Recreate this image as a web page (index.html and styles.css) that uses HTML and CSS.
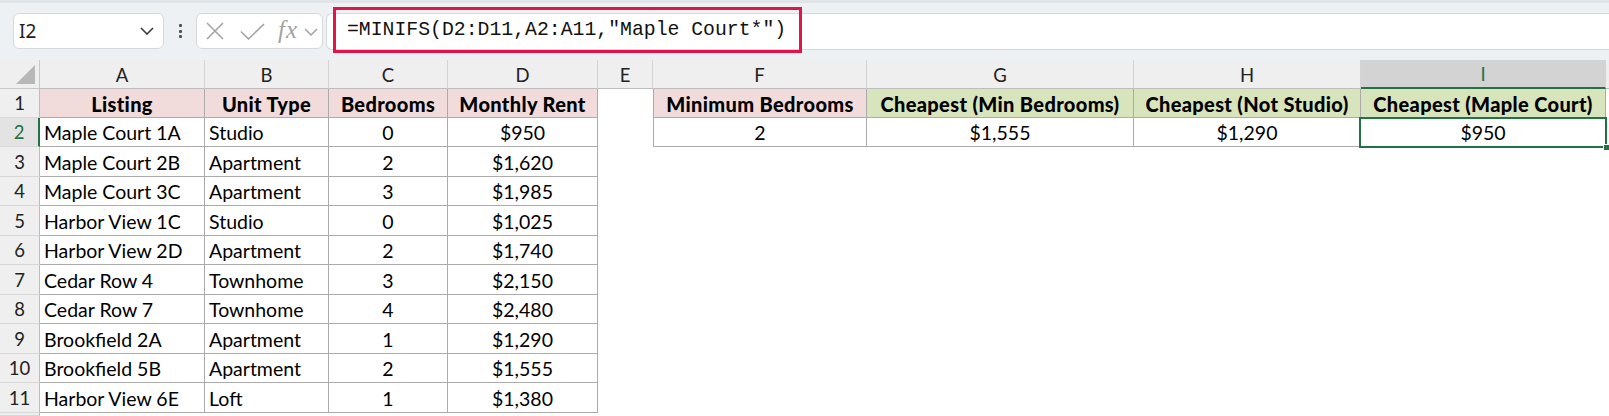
FILE: index.html
```html
<!DOCTYPE html>
<html lang="en">
<head>
<meta charset="utf-8">
<title>MINIFS</title>
<link rel="stylesheet" href="styles.css">
</head>
<body>
<div class="app">
  <div class="toolbar">
    <div class="namebox">
      <span class="nb-text">I2</span>
      <svg class="chev" width="14" height="8" viewBox="0 0 14 8"><path d="M1 1 L7 7 L13 1" fill="none" stroke="#3c3c3c" stroke-width="1.6"/></svg>
    </div>
    <div class="dots"><span></span><span></span><span></span></div>
    <div class="fxbox">
      <svg class="ic-x" width="18" height="18" viewBox="0 0 18 18"><path d="M1 1 L17 17 M17 1 L1 17" fill="none" stroke="#a3a3a3" stroke-width="1.6"/></svg>
      <svg class="ic-check" width="25" height="17" viewBox="0 0 25 17"><path d="M1 8.5 L8.5 16 L24 1" fill="none" stroke="#a3a3a3" stroke-width="1.6"/></svg>
      <span class="fx">fx</span>
      <svg class="chev-s" width="14" height="8" viewBox="0 0 14 8"><path d="M1 1 L7 7 L13 1" fill="none" stroke="#a3a3a3" stroke-width="1.5"/></svg>
    </div>
    <div class="formula">
      <span class="formula-text">=MINIFS(D2:D11,A2:A11,"Maple Court*")</span>
    </div>
  </div>

  <div class="sheet">
    <div class="corner"><span class="tri"></span></div>
    <div class="ch">A</div>
    <div class="ch">B</div>
    <div class="ch">C</div>
    <div class="ch">D</div>
    <div class="ch">E</div>
    <div class="ch">F</div>
    <div class="ch">G</div>
    <div class="ch">H</div>
    <div class="ch ch-sel">I</div>
    <div class="ch ch-last"></div>

    <div class="rh">1</div>
    <div class="c hd pink">Listing</div>
    <div class="c hd pink">Unit Type</div>
    <div class="c hd pink">Bedrooms</div>
    <div class="c hd pink">Monthly Rent</div>
    <div class="e"></div>
    <div class="c hd pink fl">Minimum Bedrooms</div>
    <div class="c hd green">Cheapest (Min Bedrooms)</div>
    <div class="c hd green">Cheapest (Not Studio)</div>
    <div class="c hd green">Cheapest (Maple Court)</div>
    <div class="e"></div>

    <div class="rh rh-sel">2</div>
    <div class="c l">Maple Court 1A</div>
    <div class="c l">Studio</div>
    <div class="c m">0</div>
    <div class="c m">$950</div>
    <div class="e"></div>
    <div class="c m fl">2</div>
    <div class="c m">$1,555</div>
    <div class="c m">$1,290</div>
    <div class="c m sel">$950<span class="handle"></span></div>
    <div class="e"></div>

    <div class="rh">3</div>
    <div class="c l">Maple Court 2B</div>
    <div class="c l">Apartment</div>
    <div class="c m">2</div>
    <div class="c m">$1,620</div>
    <div class="e span6"></div>

    <div class="rh">4</div>
    <div class="c l">Maple Court 3C</div>
    <div class="c l">Apartment</div>
    <div class="c m">3</div>
    <div class="c m">$1,985</div>
    <div class="e span6"></div>

    <div class="rh">5</div>
    <div class="c l">Harbor View 1C</div>
    <div class="c l">Studio</div>
    <div class="c m">0</div>
    <div class="c m">$1,025</div>
    <div class="e span6"></div>

    <div class="rh">6</div>
    <div class="c l">Harbor View 2D</div>
    <div class="c l">Apartment</div>
    <div class="c m">2</div>
    <div class="c m">$1,740</div>
    <div class="e span6"></div>

    <div class="rh">7</div>
    <div class="c l">Cedar Row 4</div>
    <div class="c l">Townhome</div>
    <div class="c m">3</div>
    <div class="c m">$2,150</div>
    <div class="e span6"></div>

    <div class="rh">8</div>
    <div class="c l">Cedar Row 7</div>
    <div class="c l">Townhome</div>
    <div class="c m">4</div>
    <div class="c m">$2,480</div>
    <div class="e span6"></div>

    <div class="rh">9</div>
    <div class="c l">Brookfield 2A</div>
    <div class="c l">Apartment</div>
    <div class="c m">1</div>
    <div class="c m">$1,290</div>
    <div class="e span6"></div>

    <div class="rh">10</div>
    <div class="c l">Brookfield 5B</div>
    <div class="c l">Apartment</div>
    <div class="c m">2</div>
    <div class="c m">$1,555</div>
    <div class="e span6"></div>

    <div class="rh">11</div>
    <div class="c l">Harbor View 6E</div>
    <div class="c l">Loft</div>
    <div class="c m">1</div>
    <div class="c m">$1,380</div>
    <div class="e span6"></div>

    <div class="rh"></div>
    <div class="e span10"></div>
  </div>
</div>
</body>
</html>
```

FILE: styles.css
```css
* { box-sizing: border-box; }
html, body { margin: 0; padding: 0; background: #ffffff; }
body { width: 1609px; height: 416px; overflow: hidden; font-family: "Lato", "Liberation Sans", sans-serif; }

.toolbar {
  height: 60px;
  background: #eef1f4;
  border-top: 3px solid #e2e5e8;
  display: flex;
  align-items: flex-start;
  padding-left: 13px;
}

.namebox {
  margin-top: 10px;
  width: 151px;
  height: 36px;
  background: #fff;
  border: 1px solid #d6d8da;
  border-radius: 6px;
  display: flex;
  align-items: center;
  justify-content: space-between;
  padding: 0 9px 0 5px;
}
.nb-text { font-family: "Noto Sans", "Open Sans", sans-serif; font-size: 19px; color: #222; }

.dots {
  margin-top: 10px;
  width: 32px;
  height: 36px;
  display: flex;
  flex-direction: column;
  align-items: center;
  justify-content: center;
  gap: 2.5px;
}
.dots span { width: 3px; height: 3px; background: #505050; border-radius: 1px; }

.fxbox {
  margin-top: 10px;
  width: 127px;
  height: 36px;
  background: #fff;
  border: 1px solid #d6d8da;
  border-radius: 6px;
  display: flex;
  align-items: center;
  padding-left: 9px;
}
.ic-x { margin-right: 16px; }
.ic-check { margin-right: 13px; }
.fx { font-family: "Liberation Serif", serif; font-style: italic; font-size: 25px; color: #a3a3a3; margin-right: 6px; line-height: 1; margin-top: -3px; letter-spacing: 1px; }
.chev-s { margin-top: 1px; }

.formula {
  margin-left: 3px;
  flex: 1;
  height: 37px;
  margin-top: 10px;
  background: #fff;
  border: 1px solid #d6d8da;
  border-right: none;
  border-radius: 6px 0 0 6px;
  display: flex;
  align-items: center;
}
.formula-text {
  margin-left: 6px;
  margin-top: -4px;
  height: 46px;
  width: 469px;
  border: 3px solid #e0164a;
  display: flex;
  align-items: center;
  padding-left: 11px;
  font-family: "Liberation Mono", "DejaVu Sans Mono", monospace;
  font-size: 19.8px;
  color: #111;
  white-space: pre;
}

.sheet {
  display: grid;
  grid-template-columns: 40px 165px 124px 119px 150px 55px 214px 267px 227px 245px 3px;
  grid-template-rows: 29px 29px 29px 30px 29px 30px 29px 30px 29px 30px 29px 30px 3px;
  background: #fff;
}

.corner {
  background: #efefef;
  border-right: 1px solid #c8c8c8;
  border-bottom: 1px solid #c8c8c8;
  position: relative;
}
.tri {
  position: absolute;
  right: 4px;
  bottom: 4px;
  width: 0; height: 0;
  border-left: 19px solid transparent;
  border-bottom: 19px solid #b8b8b8;
}

.ch {
  background: #efefef;
  border-right: 1px solid #d4d4d4;
  border-bottom: 1px solid #bdbdbd;
  display: flex;
  align-items: center;
  justify-content: center;
  font-size: 18.5px;
  color: #222;
  padding-top: 1px;
}
.ch-sel {
  background: #d3d3d3;
  color: #217346;
  border-bottom: 2px solid #217346;
}
.ch-last { border-right: none; }

.rh {
  background: #efefef;
  border-right: 1px solid #bdbdbd;
  border-bottom: 1px solid #d8d8d8;
  display: flex;
  align-items: center;
  justify-content: center;
  font-size: 18.5px;
  color: #222;
}
.rh-sel {
  color: #217346;
  background: #e3e3e3;
  border-right: 2px solid #217346;
}

.c {
  border-right: 1px solid #ababab;
  border-bottom: 1px solid #ababab;
  display: flex;
  align-items: center;
  font-size: 19.5px;
  color: #000;
  white-space: nowrap;
  padding-top: 1px;
}
.c.l { justify-content: flex-start; padding-left: 4px; }
.c.m { justify-content: center; }
.c.hd { justify-content: center; font-weight: 900; font-size: 20px; letter-spacing: 0.35px; }
.c.fl { border-left: 1px solid #ababab; }
.pink { background: #f2dcdb; }
.green { background: #d8e4bc; }

.sel { position: relative; }
.sel::after {
  content: "";
  position: absolute;
  left: -2px; top: -1px; right: -2px; bottom: -2px;
  border: 2px solid #217346;
}
.handle {
  position: absolute;
  right: -5px;
  bottom: -5px;
  width: 7px;
  height: 7px;
  background: #217346;
  border: 1px solid #fff;
  z-index: 2;
}

.e { background: #fff; }
.span6 { grid-column: span 6; }
.span10 { grid-column: span 10; }
```
